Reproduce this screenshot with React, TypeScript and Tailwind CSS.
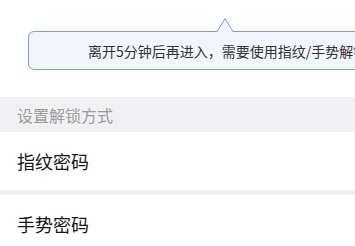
import React from "react";

const font = { fontFamily: '"Noto Sans CJK SC", "Noto Sans", sans-serif' };

const Tip: React.FC<{ text: string }> = ({ text }) => (
  <div className="relative ml-[28px] mt-[31px] flex h-[39px] w-[420px] items-center rounded-[6px] border border-[#7b9de4] bg-[#f1f5fe] pl-[59px]">
    <svg
      className="absolute left-[188px] top-[-14px]"
      width="16"
      height="14"
      viewBox="0 0 16 14"
    >
      <polygon points="0,14 8,0.6 16,14" fill="#f1f5fe" />
      <polyline points="0,13.5 8,0.6 16,13.5" fill="none" stroke="#7b9de4" strokeWidth="1" />
    </svg>
    <span className="whitespace-nowrap text-[14px] leading-none text-[#333333]">{text}</span>
  </div>
);

const Row: React.FC<{ label: string }> = ({ label }) => (
  <div className="flex h-[58px] items-center bg-white pl-[17px] text-[18px] text-[#161616]">
    {label}
  </div>
);

export default function App() {
  return (
    <div className="h-[246px] w-[355px] overflow-hidden bg-white" style={font}>
      <Tip text="离开5分钟后再进入，需要使用指纹/手势解锁" />
      <div className="mt-[27px] flex h-[35px] items-center bg-[#f1f1f3] pl-[17px] text-[16px] text-[#9b9b9b]">
        设置解锁方式
      </div>
      <Row label="指纹密码" />
      <div className="h-[5px] bg-[#f1f1f3]" />
      <Row label="手势密码" />
    </div>
  );
}
